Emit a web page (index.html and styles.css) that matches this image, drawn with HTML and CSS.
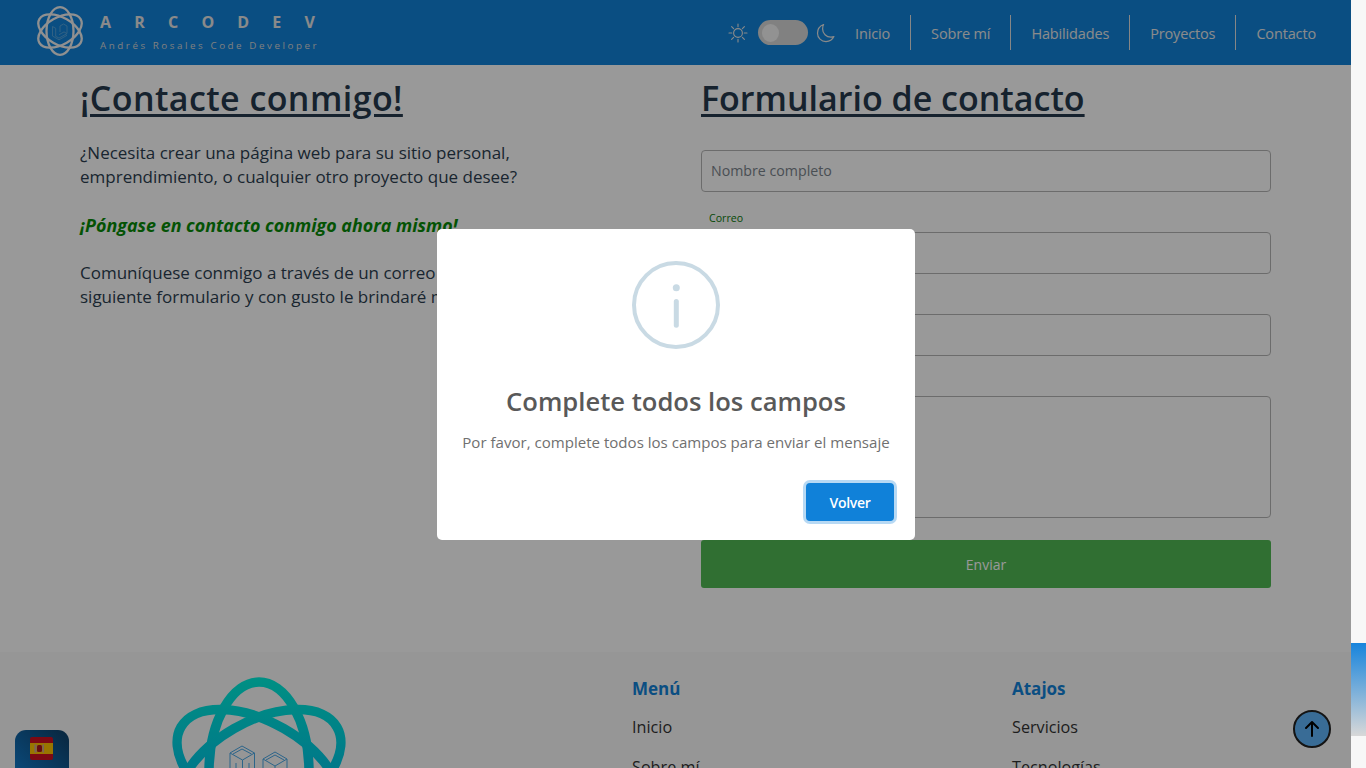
FILE: index.html
```html
<!DOCTYPE html>
<html lang="es">
<head>
<meta charset="utf-8">
<title>Arcodev</title>
<link rel="stylesheet" href="styles.css">
</head>
<body>
<div class="app">
  <div class="page">
    <header class="topbar">
      <div class="brand">
        <svg class="brand-logo" viewBox="0 0 46 50" width="46" height="50">
          <g fill="none" stroke="#f0f0f0" stroke-width="2.300">
            <ellipse cx="23" cy="25" rx="13.500" ry="23.800"/>
            <ellipse cx="23" cy="25" rx="13.500" ry="23.800" transform="rotate(60 23 25)"/>
            <ellipse cx="23" cy="25" rx="13.500" ry="23.800" transform="rotate(-60 23 25)"/>
          </g>
          <path d="M15.500 20.500v9.500l6.500 3.800 8-4.500M15.500 20.500l3.200 1.800v8l3.300 1.800 8-4.500-3-1.700-5 2.800M26.500 18l3.500 2v7.300M26.500 18l-3.500 2v6" fill="none" stroke="#5aa6dc" stroke-width=".9"/>
        </svg>
        <div class="brand-text">
          <div class="brand-name">ARCODEV</div>
          <div class="brand-sub">Andrés Rosales Code Developer</div>
        </div>
      </div>
      <div class="top-right">
        <svg class="ic-sun" viewBox="0 0 20 20" width="20" height="20" fill="none" stroke="#e6e6e6" stroke-width="1.100" stroke-linecap="round">
          <circle cx="10" cy="10" r="4.400"/>
          <path d="M10 1v2.800M10 16.200V19M1 10h2.800M16.200 10H19M3.600 3.600l2 2M14.400 14.400l2 2M3.600 16.400l2-2M14.400 5.600l2-2"/>
        </svg>
        <div class="switch"><span class="knob"></span></div>
        <svg class="ic-moon" viewBox="0 0 20 20" width="20" height="20" fill="none" stroke="#e6e6e6" stroke-width="1.200" stroke-linejoin="round">
          <path d="M7.600 1.500C3.800 3 1.500 6.400 1.500 10.200c0 4.700 3.800 8.400 8.500 8.400 3.500 0 6.500-2 7.900-5-1 .4-2 .5-3 .5-4.600 0-8.300-3.600-8.300-8.200 0-1.600.1-3 1-4.400z"/>
        </svg>
        <nav class="nav">
          <a class="nav-link">Inicio</a>
          <a class="nav-link">Sobre mí</a>
          <a class="nav-link">Habilidades</a>
          <a class="nav-link">Proyectos</a>
          <a class="nav-link">Contacto</a>
        </nav>
      </div>
    </header>

    <main class="contact">
      <section class="col-left">
        <h1 class="title title-left">¡Contacte conmigo!</h1>
        <p class="lead">¿Necesita crear una página web para su sitio personal, emprendimiento, o cualquier otro proyecto que desee?</p>
        <p class="cta">¡Póngase en contacto conmigo ahora mismo!</p>
        <p class="lead">Comuníquese conmigo a través de un correo o llene el siguiente formulario y con gusto le brindaré mi atención.</p>
      </section>
      <section class="col-right">
        <h1 class="title">Formulario de contacto</h1>
        <form class="form">
          <div class="field first"><div class="input ph">Nombre completo</div></div>
          <div class="field"><label class="lbl">Correo</label><div class="input"></div></div>
          <div class="field"><label class="lbl">Asunto</label><div class="input"></div></div>
          <div class="field"><label class="lbl">Mensaje</label><div class="input area"></div></div>
          <div class="send">Enviar</div>
        </form>
      </section>
    </main>

    <footer class="footer">
      <div class="foot-logo">
        <svg viewBox="0 0 190 190" width="190" height="190">
          <defs>
            <linearGradient id="tg" gradientUnits="userSpaceOnUse" x1="0" y1="0" x2="0" y2="190">
              <stop offset="0" stop-color="#00f0dc"/>
              <stop offset="1" stop-color="#00a0f0"/>
            </linearGradient>
            <linearGradient id="tg2" href="#tg" gradientTransform="rotate(-60 95 95)"/>
            <linearGradient id="tg3" href="#tg" gradientTransform="rotate(60 95 95)"/>
          </defs>
          <g fill="none" stroke-width="9.500">
            <ellipse cx="95" cy="95" rx="50" ry="90" stroke="url(#tg)"/>
            <ellipse cx="95" cy="95" rx="50" ry="90" stroke="url(#tg2)" transform="rotate(60 95 95)"/>
            <ellipse cx="95" cy="95" rx="50" ry="90" stroke="url(#tg3)" transform="rotate(-60 95 95)"/>
          </g>
          <g fill="none" stroke="#4aa8e6" stroke-width="1">
            <path d="M66 76l12-7 12.500 7v32H66zM66 76l12.500 7 12-7M78.500 83v25"/>
            <path d="M69 77l9-5 9.500 5M72 86v22M85 86v22"/>
            <path d="M99 82l12-7 12 7v26H99zM99 82l12 7 12-7M111 89v19"/>
            <path d="M102 83l9-5 9 5M105 91v17M117 91v17"/>
          </g>
        </svg>
      </div>
      <div class="foot-col">
        <h3 class="foot-h">Menú</h3>
        <a class="foot-link">Inicio</a>
        <a class="foot-link">Sobre mí</a>
      </div>
      <div class="foot-col">
        <h3 class="foot-h">Atajos</h3>
        <a class="foot-link">Servicios</a>
        <a class="foot-link">Tecnologías</a>
      </div>
    </footer>

    <div class="lang">
      <svg class="flag" viewBox="0 0 23 23" width="23" height="23">
        <rect width="23" height="23" rx="2" fill="#d01020"/>
        <rect y="6" width="23" height="11" fill="#ffc400"/>
        <rect x="4.500" y="7.500" width="2" height="8" fill="#c9a0a0"/>
        <rect x="7" y="8" width="5" height="7" rx="1.500" fill="#ad1519"/>
        <rect x="12.500" y="7.500" width="1.500" height="8" fill="#c9a0a0"/>
      </svg>
    </div>
    <div class="to-top">
      <svg viewBox="0 0 24 24" width="24" height="24" fill="none" stroke="#000" stroke-width="2" stroke-linecap="round" stroke-linejoin="round"><path d="M12 19V6M6 11l6-6 6 6"/></svg>
    </div>

    <div class="backdrop"></div>

    <div class="modal">
      <svg class="info" viewBox="0 0 88 88" width="88" height="88" fill="none">
        <circle cx="44" cy="44" r="42" stroke="#c9dae4" stroke-width="4"/>
        <circle cx="44.300" cy="26.700" r="3.500" fill="#c9dae4"/>
        <rect x="41.800" y="38" width="5" height="28.700" rx="2.500" fill="#c9dae4"/>
      </svg>
      <h2 class="m-title">Complete todos los campos</h2>
      <p class="m-text">Por favor, complete todos los campos para enviar el mensaje</p>
      <div class="m-actions"><button class="m-btn" type="button">Volver</button></div>
    </div>
  </div>
  <div class="scroll"><div class="thumb"></div></div>
</div>
</body>
</html>
```
FILE: styles.css
```css
* { box-sizing: border-box; }
html, body { margin: 0; height: 100%; overflow: hidden; }
body { font-family: "Open Sans", "Noto Sans", sans-serif; color: #212529; background: #fff; }
.app { display: flex; width: 1366px; height: 768px; }
.page { position: relative; width: 1351px; height: 768px; overflow: hidden; background: #fff; }

.topbar { height: 65px; background: #1283d9; display: flex; justify-content: space-between; align-items: center; padding: 0 15px 0 37px; color: #fff; }
.brand { display: flex; align-items: center; gap: 17px; }
.brand-logo { width: 46px; height: 50px; margin-top: -3px; }
.brand-name { font-size: 16px; font-weight: 700; letter-spacing: 23.2px; line-height: 19px; color: #e6e6e6; }
.brand-sub { font-size: 9.800px; letter-spacing: 2.550px; line-height: 13px; margin-top: 7px; color: #d5d5d5; white-space: nowrap; }
.top-right { display: flex; align-items: center; }
.ic-sun { margin-right: 10px; }
.switch { width: 50px; height: 25px; border-radius: 13px; background: #d8d8d8; display: flex; align-items: center; padding-left: 4px; margin-right: 8px; }
.knob { width: 17px; height: 18px; border-radius: 50%; background: #f4f4f4; }
.ic-moon { margin-right: -1px; }
.nav { display: flex; align-items: center; }
.nav-link { font-size: 14.500px; height: 35px; line-height: 37px; padding: 0 20px; color: #e8e8e8; border-left: 1px solid #e0e0e0; white-space: nowrap; letter-spacing: -.15px; }
.nav-link:first-child { border-left: 0; }

.contact { display: grid; grid-template-columns: 621px 570px; padding: 9px 0 0 80px; height: 587px; }
.title { font-size: 34px; font-weight: 600; line-height: 48px; margin: 0; text-decoration: underline; text-decoration-thickness: 2.500px; text-underline-offset: 3px; color: #26394d; white-space: nowrap; }
.title-left { letter-spacing: .42px; }
.col-left { width: 470px; }
.lead { font-size: 17px; line-height: 24px; margin: 19px 0 0; color: #2c3e50; }
.cta { font-size: 17.900px; line-height: 24px; margin: 24px 0; font-weight: 700; font-style: italic; color: #088a08; white-space: nowrap; }
.cta + .lead { margin: 0; }
.form { display: flex; flex-direction: column; margin-top: 28px; }
.field { padding-top: 18px; }
.field.first { padding-top: 0; }
.lbl { display: block; font-size: 10.600px; line-height: 14px; height: 22px; padding: 1px 0 0 8px; color: #0a7a0a; }
.input { height: 42px; border: 1px solid #b5b5b5; border-radius: 4px; background: #fff; padding: 0 9px; line-height: 39px; font-size: 14.200px; }
.ph { color: #7b848c; }
.area { height: 122px; }
.send { margin-top: 22px; height: 48px; border-radius: 3px; background: #50ba54; color: #fff; font-size: 14px; display: flex; align-items: center; justify-content: center; }

.footer { height: 116px; background: #fafafa; display: grid; grid-template-columns: 632px 380px 1fr; overflow: hidden; flex: none; }
.foot-logo { padding: 25px 0 0 164px; }
.foot-logo svg { display: block; }
.foot-col { display: flex; flex-direction: column; padding-top: 24px; }
.foot-h { font-size: 17px; line-height: 26px; margin: 0; font-weight: 700; color: #1283d9; }
.foot-link { font-size: 16.200px; line-height: 24px; margin-top: 13px; color: #333; }
.foot-link + .foot-link { margin-top: 16px; }

.lang { position: absolute; left: 15px; top: 730px; width: 54px; height: 54px; border-radius: 11px; background: linear-gradient(45deg, #1283d9, #0e3f66); display: flex; justify-content: center; padding: 7px 1px 0 0; }
.flag { width: 23px; height: 23px; }
.to-top { position: absolute; left: 1293px; top: 710px; width: 38px; height: 38px; border-radius: 50%; background: #60b5fa; border: 2px solid #222; display: flex; align-items: center; justify-content: center; }

.backdrop { position: absolute; inset: 0; background: rgba(0,0,0,.4); }

.modal { position: absolute; left: 437px; top: 229px; width: 478px; height: 311px; background: #fff; border-radius: 5px; display: flex; flex-direction: column; align-items: center; padding-top: 32px; }
.info { display: block; }
.m-title { font-size: 25.600px; font-weight: 600; line-height: 36px; margin: 35px 0 0; color: #595959; white-space: nowrap; }
.m-text { font-size: 15.070px; line-height: 22px; margin: 11px 0 0; color: #707070; white-space: nowrap; }
.m-actions { align-self: flex-end; margin: 30px 21px 0 0; }
.m-btn { width: 88px; height: 38px; border: 0; border-radius: 4px; background: #1081d9; color: #fff; font: 600 14px "Open Sans", sans-serif; box-shadow: 0 0 0 3px rgba(16,129,217,.3); letter-spacing: -.3px; }

.scroll { width: 15px; height: 768px; background: #f7f7f7; position: relative; }
.thumb { position: absolute; top: 643px; left: 0; width: 15px; height: 93px; background: linear-gradient(180deg, #1784dc, #d8d8d8); }
```
